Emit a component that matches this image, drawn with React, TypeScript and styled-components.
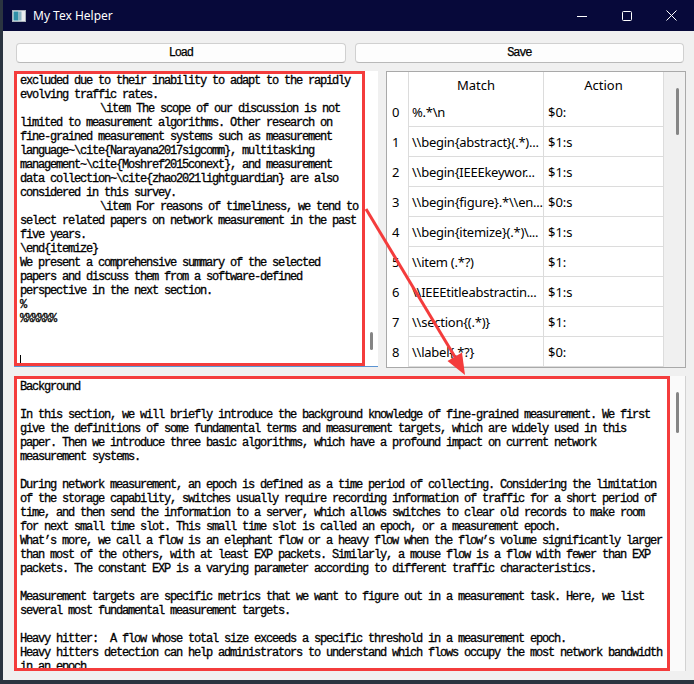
import React from "react";
import styled, { createGlobalStyle, css } from "styled-components";

const RED = "#f43c3c";
const MONO = `"Liberation Mono", "Courier New", monospace`;
const UI = `"Noto Sans", "Open Sans", Arial, sans-serif`;

const GlobalStyle = createGlobalStyle`
  html, body { margin: 0; padding: 0; }
  body {
    background: #2b3440;
    width: 694px;
    height: 684px;
    overflow: hidden;
  }
`;

const leftLines: { text: string; indent?: boolean; caret?: boolean }[] = [
  { text: "excluded due to their inability to adapt to the rapidly" },
  { text: "evolving traffic rates." },
  { text: String.raw`\item The scope of our discussion is not`, indent: true },
  { text: "limited to measurement algorithms. Other research on" },
  { text: "fine-grained measurement systems such as measurement" },
  { text: String.raw`language~\cite{Narayana2017sigcomm}, multitasking` },
  { text: String.raw`management~\cite{Moshref2015conext}, and measurement` },
  { text: String.raw`data collection~\cite{zhao2021lightguardian} are also` },
  { text: "considered in this survey." },
  { text: String.raw`\item For reasons of timeliness, we tend to`, indent: true },
  { text: "select related papers on network measurement in the past" },
  { text: "five years." },
  { text: String.raw`\end{itemize}` },
  { text: "We present a comprehensive summary of the selected" },
  { text: "papers and discuss them from a software-defined" },
  { text: "perspective in the next section." },
  { text: "%" },
  { text: "%%%%%%" },
  { text: "" },
  { text: "" },
  { text: "", caret: true },
];

const bottomLines = [
  "Background",
  "",
  "In this section, we will briefly introduce the background knowledge of fine-grained measurement. We first",
  "give the definitions of some fundamental terms and measurement targets, which are widely used in this",
  "paper. Then we introduce three basic algorithms, which have a profound impact on current network",
  "measurement systems.",
  "",
  "During network measurement, an epoch is defined as a time period of collecting. Considering the limitation",
  "of the storage capability, switches usually require recording information of traffic for a short period of",
  "time, and then send the information to a server, which allows switches to clear old records to make room",
  "for next small time slot. This small time slot is called an epoch, or a measurement epoch.",
  "What\u2019s more, we call a flow is an elephant flow or a heavy flow when the flow\u2019s volume significantly larger",
  "than most of the others, with at least EXP packets. Similarly, a mouse flow is a flow with fewer than EXP",
  "packets. The constant EXP is a varying parameter according to different traffic characteristics.",
  "",
  "Measurement targets are specific metrics that we want to figure out in a measurement task. Here, we list",
  "several most fundamental measurement targets.",
  "",
  "Heavy hitter:  A flow whose total size exceeds a specific threshold in a measurement epoch.",
  "Heavy hitters detection can help administrators to understand which flows occupy the most network bandwidth",
  "in an epoch.",
];

const rules: [string, string][] = [
  [String.raw`%.*\n`, "$0:"],
  [String.raw`\\begin{abstract}(.*)...`, "$1:s"],
  [String.raw`\\begin{IEEEkeywor...`, "$1:s"],
  [String.raw`\\begin{figure}.*\\en...`, "$0:s"],
  [String.raw`\\begin{itemize}(.*)\...`, "$1:s"],
  [String.raw`\\item (.*?)`, "$1:"],
  [String.raw`\\IEEEtitleabstractin...`, "$1:s"],
  [String.raw`\\section{(.*)}`, "$1:"],
  [String.raw`\\label{.*?}`, "$0:"],
];

export default function App() {
  return (
    <>
      <GlobalStyle />
      <Desktop>
        <Window>
          <TitleBar>
            <AppIcon viewBox="0 0 14 12">
              <rect x="0.5" y="0.5" width="13" height="11" fill="#e9ecef" stroke="#aab2ba" />
              <rect x="1.5" y="1.5" width="5" height="9" fill="#2f8fa8" />
              <rect x="6.5" y="1.5" width="3" height="9" fill="#8fb6c6" />
            </AppIcon>
            <Title>My Tex Helper</Title>
            <Controls>
              <Control>
                <svg width="10" height="10" viewBox="0 0 10 10">
                  <line x1="0" y1="5.5" x2="10" y2="5.5" stroke="#fff" strokeWidth="1" />
                </svg>
              </Control>
              <Control>
                <svg width="10" height="10" viewBox="0 0 10 10">
                  <rect x="0.5" y="0.5" width="9" height="9" rx="1" fill="none" stroke="#fff" strokeWidth="1" />
                </svg>
              </Control>
              <Control>
                <svg width="11" height="11" viewBox="0 0 11 11">
                  <path d="M0.5 0.5 L10.5 10.5 M10.5 0.5 L0.5 10.5" stroke="#fff" strokeWidth="1" />
                </svg>
              </Control>
            </Controls>
          </TitleBar>

          <Body>
            <ButtonRow>
              <PushButton>Load</PushButton>
              <PushButton>Save</PushButton>
            </ButtonRow>

            <MiddleRow>
              <Editor $focused>
                <TextPane>
                  <TextBlock $shift={0}>
                    {leftLines.map((l, i) => (
                      <Line key={i}>
                        {l.indent && <Indent />}
                        {l.text}
                        {l.caret && <Caret />}
                      </Line>
                    ))}
                  </TextBlock>
                </TextPane>
                <ScrollTrack $width={13} $pad={5}>
                  <Thumb $top={261} $height={18} />
                </ScrollTrack>
              </Editor>

              <TableFrame>
                <Grid>
                  <Corner />
                  <HeaderCell>Match</HeaderCell>
                  <HeaderCell>Action</HeaderCell>
                  {rules.map(([m, a], i) => (
                    <React.Fragment key={i}>
                      <RowHead>{i}</RowHead>
                      <Cell>{m}</Cell>
                      <Cell $action>{a}</Cell>
                    </React.Fragment>
                  ))}
                </Grid>
                <ScrollTrack $width={21} $pad={12} $grey>
                  <Thumb $top={16} $height={47} />
                </ScrollTrack>
              </TableFrame>
            </MiddleRow>

            <Editor $height={295}>
              <TextPane>
                <TextBlock $shift={1}>
                  {bottomLines.map((l, i) => (
                    <Line key={i}>{l}</Line>
                  ))}
                </TextBlock>
              </TextPane>
              <ScrollTrack $width={16} $pad={6} $edge>
                <Thumb $top={16} $height={41} />
              </ScrollTrack>
            </Editor>
          </Body>

          <Annotation width="691" height="680" viewBox="3 0 691 680">
            <line x1="366" y1="209" x2="455" y2="357" stroke={RED} strokeWidth="3" />
            <polygon points="465,375 447.5,361 462,352.5" fill={RED} />
          </Annotation>
        </Window>
      </Desktop>
    </>
  );
}

const Desktop = styled.div`
  padding-left: 3px;
`;

const Window = styled.div`
  position: relative;
  width: 691px;
  height: 680px;
  background: #f0f0f0;
  display: flex;
  flex-direction: column;
  overflow: hidden;
`;

const TitleBar = styled.div`
  height: 31px;
  flex: none;
  background: #07093a;
  display: flex;
  align-items: center;
  padding-left: 9px;
`;

const AppIcon = styled.svg`
  width: 14px;
  height: 12px;
`;

const Title = styled.span`
  margin-left: 7px;
  color: #ffffff;
  font-family: ${UI};
  font-size: 12px;
`;

const Controls = styled.div`
  margin-left: auto;
  display: flex;
  height: 100%;
`;

const Control = styled.div`
  width: 45px;
  display: flex;
  align-items: center;
  justify-content: center;
`;

const Body = styled.div`
  flex: 1;
  display: flex;
  flex-direction: column;
  gap: 8px;
  padding: 12px 8px 9px 11px;
`;

const ButtonRow = styled.div`
  display: grid;
  grid-template-columns: 1fr 1fr;
  gap: 9px;
  padding: 0 2px;
`;

const PushButton = styled.button`
  height: 20px;
  padding: 0;
  background: #fdfdfd;
  border: 1px solid #d0d0d0;
  border-bottom-color: #b9b9b9;
  border-radius: 4px;
  font-family: ${MONO};
  font-size: 12px;
  letter-spacing: -1.2px;
  color: #000;
  -webkit-text-stroke: 0.25px #000;
`;

const MiddleRow = styled.div`
  display: grid;
  grid-template-columns: 364px 300px;
  gap: 8px;
  height: 297px;
  align-items: start;
`;

const Editor = styled.div<{ $focused?: boolean; $height?: number }>`
  display: flex;
  background: #ffffff;
  height: ${(p) => (p.$height ? `${p.$height}px` : "296px")};
  box-sizing: border-box;
  ${(p) =>
    p.$focused &&
    css`
      border-bottom: 1px solid #5a93d2;
    `}
`;

const TextPane = styled.div`
  flex: 1;
  border: 3px solid ${RED};
  overflow: hidden;
  padding-left: 3px;
  font-family: ${MONO};
  font-size: 12px;
  line-height: 14px;
  letter-spacing: -1.2px;
  color: #000;
  -webkit-text-stroke: 0.3px #000;
`;

const TextBlock = styled.div<{ $shift: number }>`
  margin-top: ${(p) => p.$shift}px;
`;

const Line = styled.div`
  height: 14px;
  white-space: pre;
`;

const Indent = styled.span`
  display: inline-block;
  width: 80px;
`;

const Caret = styled.span`
  display: inline-block;
  width: 1px;
  height: 11px;
  background: #000;
  vertical-align: -2px;
`;

const ScrollTrack = styled.div<{ $width: number; $pad: number; $grey?: boolean; $edge?: boolean }>`
  flex: none;
  width: ${(p) => p.$width}px;
  box-sizing: border-box;
  padding-left: ${(p) => p.$pad}px;
  background: ${(p) => (p.$grey ? "#f0f0f0" : p.$edge ? "#fafafa" : "#ffffff")};
  border-right: ${(p) => (p.$edge ? "1px solid #d2d2d2" : "none")};
  display: flex;
  align-items: flex-start;
`;

const Thumb = styled.div<{ $top: number; $height: number }>`
  width: 3px;
  margin-top: ${(p) => p.$top}px;
  height: ${(p) => p.$height}px;
  border-radius: 2px;
  background: #858585;
`;

const TableFrame = styled.div`
  height: 297px;
  box-sizing: border-box;
  border: 1px solid #a9a9a9;
  display: flex;
  background: #f0f0f0;
`;

const Grid = styled.div`
  display: grid;
  grid-template-columns: 22px 135px 120px;
  grid-template-rows: 25px;
  grid-auto-rows: 30px;
  background: #ffffff;
  font-family: ${UI};
  font-size: 13px;
  color: #000;
`;

const cellBase = css`
  box-sizing: border-box;
  border-right: 1px solid #dcdcdc;
  display: flex;
  align-items: center;
  white-space: nowrap;
  overflow: hidden;
`;

const Corner = styled.div`
  ${cellBase}
`;

const HeaderCell = styled.div`
  ${cellBase}
  justify-content: center;
  padding-top: 1px;
`;

const RowHead = styled.div`
  ${cellBase}
  padding-left: 5px;
`;

const Cell = styled.div<{ $action?: boolean }>`
  ${cellBase}
  border-bottom: 1px solid #dcdcdc;
  padding-left: ${(p) => (p.$action ? 4 : 3)}px;
  letter-spacing: ${(p) => (p.$action ? "0" : "-0.25px")};
`;

const Annotation = styled.svg`
  position: absolute;
  left: 0;
  top: 0;
  pointer-events: none;
`;
